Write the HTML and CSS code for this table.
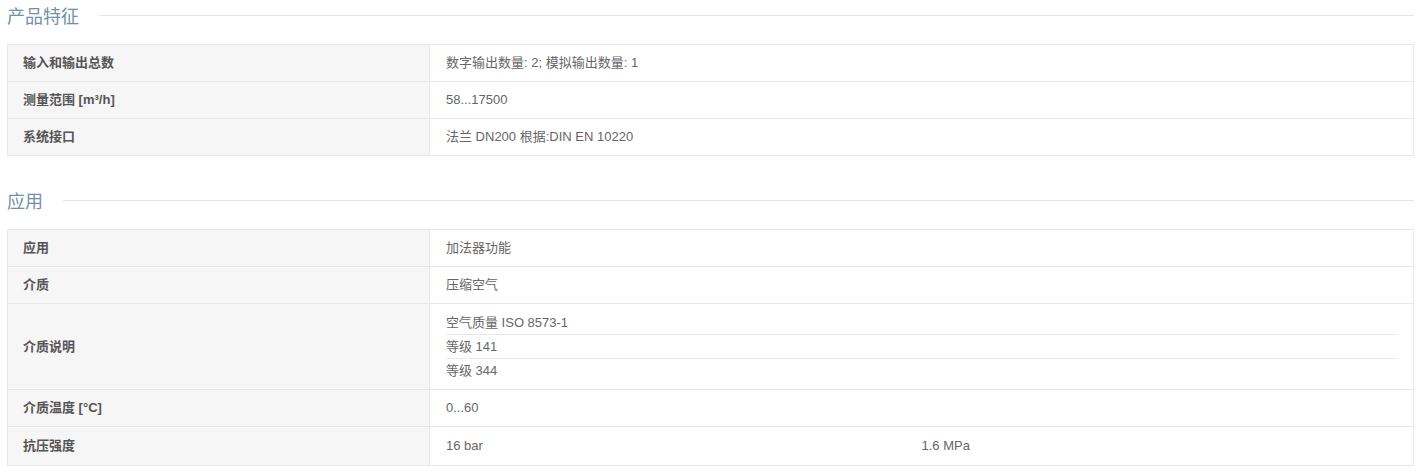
FILE: index.html
```html
<!DOCTYPE html>
<html lang="zh">
  <head>
    <meta charset="UTF-8" />
    <meta name="viewport" content="width=device-width, initial-scale=1.0" />
    <title>产品特征</title>
    <link rel="stylesheet" href="styles.css">
  </head>
  <body>
    <main class="specs">
      <section class="spec-group">
        <h2 class="spec-group__title">产品特征</h2>
        <table class="spec-table">
          <colgroup>
            <col class="spec-table__label-col" />
            <col />
          </colgroup>
          <tr>
            <th>输入和输出总数</th>
            <td>数字输出数量: 2; 模拟输出数量: 1</td>
          </tr>
          <tr>
            <th>测量范围 [m³/h]</th>
            <td>58...17500</td>
          </tr>
          <tr>
            <th>系统接口</th>
            <td>法兰 DN200 根据:DIN EN 10220</td>
          </tr>
        </table>
      </section>

      <section class="spec-group">
        <h2 class="spec-group__title">应用</h2>
        <table class="spec-table">
          <colgroup>
            <col class="spec-table__label-col" />
            <col />
          </colgroup>
          <tr>
            <th>应用</th>
            <td>加法器功能</td>
          </tr>
          <tr>
            <th>介质</th>
            <td>压缩空气</td>
          </tr>
          <tr>
            <th>介质说明</th>
            <td class="spec-table__list">
              <div class="value-line">空气质量 ISO 8573-1</div>
              <div class="value-line">等级 141</div>
              <div class="value-line">等级 344</div>
            </td>
          </tr>
          <tr>
            <th>介质温度 [°C]</th>
            <td>0...60</td>
          </tr>
          <tr>
            <th>抗压强度</th>
            <td>
              <div class="value-pair">
                <span>16 bar</span>
                <span>1.6 MPa</span>
              </div>
            </td>
          </tr>
        </table>
      </section>
    </main>
  </body>
</html>
```

FILE: styles.css
```css
body {
  margin: 0;
  background-color: #fff;
  font-family: "Liberation Sans", "Noto Sans CJK SC", sans-serif;
  font-size: 13px;
  color: #555;
}

.specs {
  padding: 0 7px;
}

/* Section heading with rule */
.spec-group {
  margin-bottom: 29px;
}

.spec-group__title {
  display: flex;
  align-items: center;
  gap: 20px;
  height: 30px;
  margin: 0 0 14px;
  font-size: 18px;
  font-weight: normal;
  color: #7390a8;
}

.spec-group__title::after {
  content: "";
  flex: 1;
  height: 1px;
  background-color: #e6e6e6;
}

/* Table */
.spec-table {
  width: 100%;
  border-collapse: collapse;
  table-layout: fixed;
  border: 1px solid #e8e8e8;
}

.spec-table__label-col {
  width: 422px;
}

.spec-table th,
.spec-table td {
  padding: 8px 16px;
  line-height: 20px;
  text-align: left;
  vertical-align: middle;
  border: 1px solid #e8e8e8;
}

.spec-table th {
  padding-left: 15px;
  background-color: #f6f6f6;
  font-weight: bold;
  color: #555;
}

.spec-table td {
  color: #666;
}

.spec-table td.spec-table__list {
  padding-top: 7px;
  padding-bottom: 7px;
}

.value-line {
  line-height: 23px;
  border-bottom: 1px solid #e8e8e8;
}

.value-line:last-child {
  border-bottom: none;
}

.value-pair {
  display: grid;
  grid-template-columns: 1fr 1fr;
  line-height: 22px;
}
```
